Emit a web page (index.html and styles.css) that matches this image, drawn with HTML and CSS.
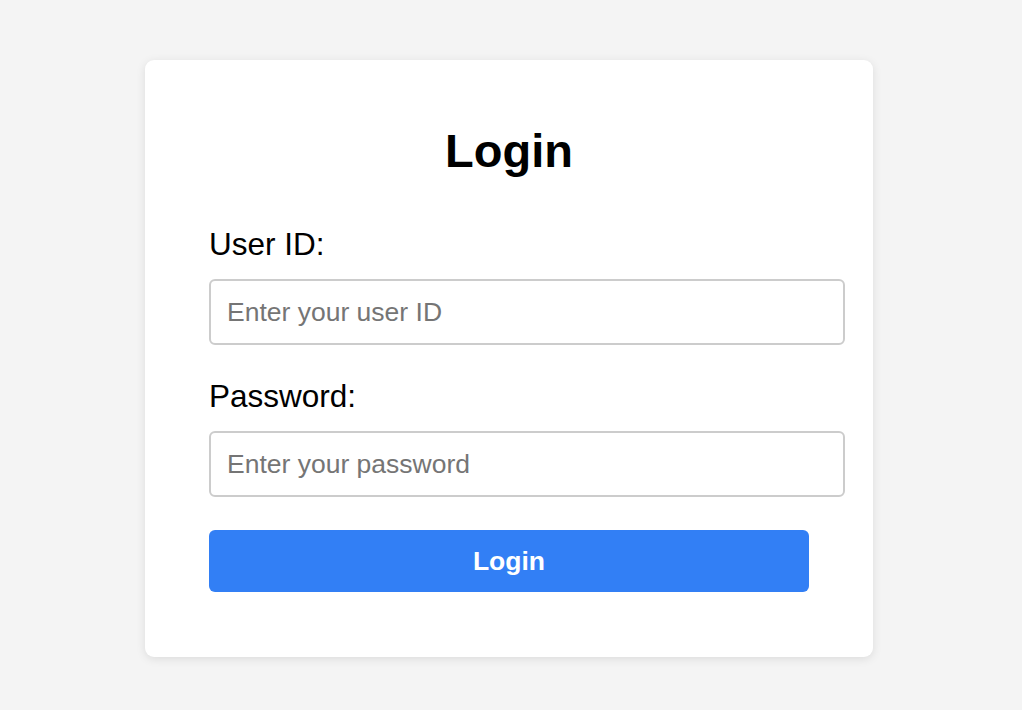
FILE: index.html
```html
<!DOCTYPE html>
<html lang="en">
<head>
  <meta charset="UTF-8">
  <meta name="viewport" content="width=device-width, initial-scale=1.0">
  <title>Login</title>
  <link rel="stylesheet" href="styles.css">
</head>
<body>

  <!-- Login Card -->
  <div class="login-container">
    <h1>Login</h1>
    <form class="login-form" onsubmit="return false;">
      <div class="form-group">
        <label for="userid">User ID:</label>
        <input type="text" id="userid" placeholder="Enter your user ID">
      </div>
      <div class="form-group">
        <label for="password">Password:</label>
        <input type="password" id="password" placeholder="Enter your password">
      </div>
      <button type="submit" class="login-btn">Login</button>
    </form>
  </div>

</body>
</html>
```

FILE: styles.css
```css
/* General Styling */
* {
  margin: 0;
  padding: 0;
  box-sizing: border-box;
  font-family: "Liberation Sans", Arial, sans-serif;
}

body {
  display: flex;
  justify-content: center;
  align-items: center;
  min-height: 100vh;
  padding: 6px 4px 0 0;
  background-color: #f4f4f4;
}

/* Card */
.login-container {
  width: 728px;
  background-color: #fff;
  padding: 64px 64px 65px;
  border-radius: 9px;
  box-shadow: 0 2px 10px rgba(0, 0, 0, 0.1);
}

.login-container h1 {
  text-align: center;
  font-size: 47px;
  font-weight: bold;
  line-height: 54px;
  color: #000;
  margin-bottom: 48px;
}

/* Form */
.form-group {
  margin-bottom: 33px;
}

.form-group label {
  display: block;
  font-size: 31.5px;
  line-height: 36px;
  color: #000;
  margin-bottom: 17px;
}

.form-group input {
  box-sizing: content-box;
  width: 100%;
  padding: 16px;
  font-size: 26.5px;
  line-height: 30px;
  border: 2px solid #ccc;
  border-radius: 6px;
  color: #000;
  outline: none;
}

.form-group input::placeholder {
  color: #757575;
}

/* Button */
.login-btn {
  display: block;
  width: 100%;
  padding: 16px;
  font-size: 26.5px;
  font-weight: bold;
  line-height: 30px;
  color: #fff;
  background-color: #327ff5;
  border: none;
  border-radius: 6px;
  cursor: pointer;
}

.login-btn:hover {
  background-color: #1f6fe8;
}
```
